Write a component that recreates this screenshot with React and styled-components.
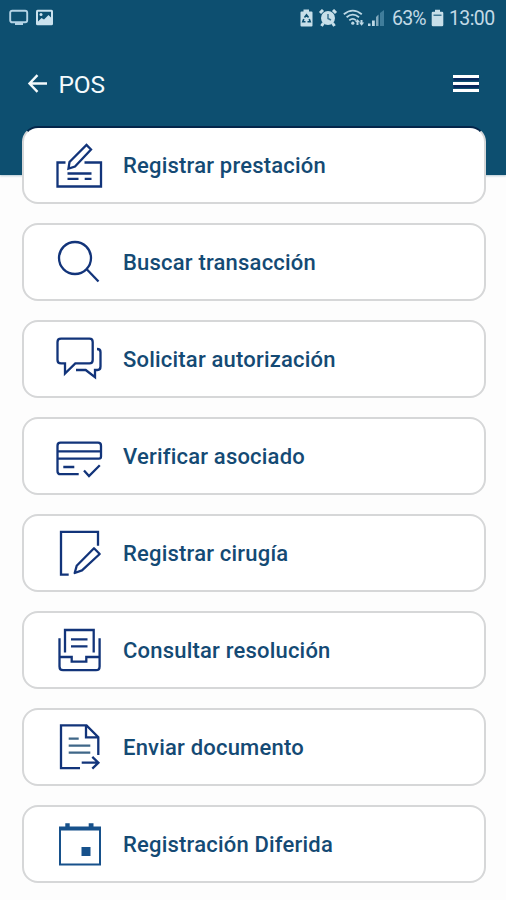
import React from "react";
import styled, { createGlobalStyle } from "styled-components";

const GlobalStyle = createGlobalStyle`
  body { margin: 0; background: #fdfdfd; }
  * { box-sizing: border-box; }
`;

const Screen = styled.div`
  width: 506px;
  height: 900px;
  overflow: hidden;
  background: #fdfdfd;
  font-family: Roboto, "Liberation Sans", sans-serif;
`;

const Header = styled.header`
  height: 175px;
  background: #0d4f70;
  box-shadow: 0 1px 2px rgba(13, 79, 112, 0.3);
`;

const StatusBar = styled.div`
  height: 36px;
  padding: 0 11px 0 9px;
  display: flex;
  justify-content: space-between;
  align-items: center;
`;

const StatusGroup = styled.div`
  display: flex;
  align-items: center;
`;

const StatusText = styled.span`
  width: ${(p) => p.$width}px;
  padding-top: 1px;
  font-size: 19.5px;
  line-height: 36px;
  color: #c3dae6;
  white-space: nowrap;
  letter-spacing: ${(p) => p.$spacing}px;
`;

const StatusIcon = styled.svg`
  display: block;
  flex: none;
`;

const TitleBar = styled.div`
  height: 96px;
  padding: 0 26px 0 27px;
  display: flex;
  align-items: center;
`;

const Title = styled.h1`
  margin: 0 auto 0 10.5px;
  padding-top: 1px;
  font-size: 24.5px;
  font-weight: 400;
  line-height: 30px;
  letter-spacing: -0.2px;
  color: #f4fafc;
`;

const IconButton = styled.button`
  padding: 0;
  border: 0;
  background: none;
  display: block;
`;

const Menu = styled.main`
  margin-top: -49px;
  padding: 0 20.5px 0 21.5px;
  display: grid;
  grid-auto-rows: 78px;
  row-gap: 19px;
`;

const Card = styled.button`
  display: flex;
  align-items: center;
  width: 100%;
  padding: 0 0 0 30px;
  border: 2px solid #d6d7d8;
  border-top-color: ${(p) => (p.$overHeader ? "#04264a" : "#d6d7d8")};
  border-radius: 16px;
  background: #fff;
  font-family: inherit;
  text-align: left;
`;

const CardIcon = styled.svg`
  display: block;
  flex: none;
  width: 50px;
  height: 50px;
  fill: none;
  stroke: #12347a;
  stroke-width: 2.3;
`;

const Label = styled.span`
  margin-left: 19.5px;
  padding-top: 2px;
  font-size: 22px;
  font-weight: 500;
  line-height: 28px;
  letter-spacing: 0.2px;
  color: #144a74;
  white-space: nowrap;
`;

const items = [
  {
    label: "Registrar prestación",
    icon: (
      <>
        <path d="M11.5 22.5H3.5V46.5H47V22.5H30.5" />
        <path d="M14.5 28.5L15.5 22L32.5 5L37 9.5L21 26.5Z" />
        <path d="M13.5 33.5H37.5M13.5 38.8H24.5M30.7 38.8H37.5" />
      </>
    ),
  },
  {
    label: "Buscar transacción",
    icon: (
      <>
        <circle cx="21" cy="21" r="16" />
        <path d="M32.5 32L44.5 44.5" />
      </>
    ),
  },
  {
    label: "Solicitar autorización",
    icon: (
      <>
        <path d="M7 4.7H35.5Q38.7 4.7 38.7 8V26Q38.7 29.4 35.5 29.4H21.3L11 39.5V29.4H7Q3.5 29.4 3.5 26V8Q3.5 4.7 7 4.7Z" />
        <path d="M43 15Q46.5 15 46.5 18V32.5Q46.5 36 43.5 36H41V43.2L31.7 36H22" />
      </>
    ),
  },
  {
    label: "Verificar asociado",
    icon: (
      <>
        <path d="M24.7 43.2H6.5Q3.5 43.2 3.5 40.2V14.7Q3.5 11.7 6.5 11.7H44Q47 11.7 47 14.7V25.5Q47 27.6 45 27.6H3.5M3.5 20.4H47" />
        <path d="M9.3 36H20.3M30 39.5L35 45L45.8 34.2" />
      </>
    ),
  },
  {
    label: "Registrar cirugía",
    icon: (
      <>
        <path d="M44 17.7V3.8H7V46.7H14.7" />
        <path d="M20.7 45L22.7 37.7L40 20.3L45.7 26L28 42.3Z" strokeLinejoin="round" />
      </>
    ),
  },
  {
    label: "Consultar resolución",
    icon: (
      <>
        <path d="M11 27.5V5H39.7V27.5M17 14.4H33.5M17 21.3H33.5" />
        <path d="M5.5 13.3V41.5Q5.5 45.2 9 45.2H42Q45.6 45.2 45.6 41.5V13.3M5.5 32H17.7V36.7H32.3V32H45.6" />
      </>
    ),
  },
  {
    label: "Enviar documento",
    icon: (
      <>
        <path d="M26 46.2H7V3.4H32.5L44.3 15.2V33M32 3.4V15.3H44.3" />
        <path stroke="#3f6788" d="M14.7 16.7H24.7M14.7 23.7H36.3M14.7 30.7H36.3" />
        <path d="M27.7 40.7H44.3M38.3 34.8L44.4 40.7L38.3 46.6" />
      </>
    ),
  },
  {
    label: "Registración Diferida",
    icon: (
      <>
        <path stroke="#17518b" d="M6 9V45.6H46V9" strokeWidth="2" />
        <path fill="#17518b" stroke="none" d="M5 7.6H11.3V4.2H15.7V7.6H34.7V4.2H39.5V7.6H47V11.4H5ZM27.5 28H36.5V37H27.5Z" />
      </>
    ),
  },
];

function TvIcon() {
  return (
    <StatusIcon width="20" height="18" viewBox="0 0 20 18" fill="none">
      <rect x="1.2" y="1.7" width="17" height="11.6" rx="2" stroke="#b4d3e5" strokeWidth="1.9" />
      <path d="M6 15H14" stroke="#b4d3e5" strokeWidth="2" />
    </StatusIcon>
  );
}

function PhotoIcon() {
  return (
    <StatusIcon width="24" height="18" viewBox="0 0 24 18">
      <rect x="7" y=".8" width="17" height="15.5" rx="1.5" fill="#cbe2ee" />
      <path d="M9 2.8H22V8.5L19.5 6L15 10.5L12.5 9L9 12.5Z" fill="#0d4f70" />
      <circle cx="12" cy="5.5" r="1.5" fill="#cbe2ee" />
    </StatusIcon>
  );
}

function RecycleBatteryIcon() {
  return (
    <StatusIcon width="13" height="18" viewBox="0 0 13 18">
      <path d="M3.5 0.5H9V2.5H11.5Q12.5 2.5 12.5 3.5V16.5Q12.5 17.5 11.5 17.5H1.5Q.5 17.5.5 16.5V3.5Q.5 2.5 1.5 2.5H3.5Z" fill="#c8dfe9" />
      <path d="M4.5 8.5L6.5 5.8L8.5 8.5M3.8 10L2.8 12.8H5.5M9.2 10L10.2 12.8H7.5" fill="none" stroke="#0d4f70" strokeWidth="1.6" />
    </StatusIcon>
  );
}

function AlarmIcon() {
  return (
    <StatusIcon width="30" height="18" viewBox="0 0 30 18">
      <path d="M10 1L7 4M20 1L23 4M10.5 14L8.5 17M19.5 14L21.5 17" stroke="#c8dfe9" strokeWidth="3" />
      <circle cx="15" cy="9" r="7" fill="#c8dfe9" />
      <path d="M15 5V9.5L18 11" fill="none" stroke="#3b7390" strokeWidth="1.5" />
    </StatusIcon>
  );
}

function WifiIcon() {
  return (
    <StatusIcon width="22" height="18" viewBox="0 0 22 18" fill="none" stroke="#bdd8e5" strokeWidth="1.8">
      <path d="M.8 5.2Q9.8-2 18.8 5.2M3.6 8.3Q9.8 3 16 8.3M6.3 11.4Q9.8 8.3 13 11.4" />
      <circle cx="9.8" cy="14.2" r="1.6" fill="#bdd8e5" stroke="none" />
      <path fill="#bdd8e5" stroke="none" d="M12 13L14.5 10.2L17 13H15.5V16H13.5V13ZM16 13.5H17.5V11H19.5V13.5H21.2L18.6 16.7Z" />
    </StatusIcon>
  );
}

function SignalIcon() {
  return (
    <StatusIcon width="27" height="18" viewBox="0 0 27 18">
      <path d="M3 14.5H5.5V17H3ZM7 11.5H9.8V17H7Z" fill="#bdd8e5" />
      <path d="M11 8L13.5 5.5V17H11Z" fill="#83aabd" />
      <path d="M15 4L19 1V17H15Z" fill="#407d9b" />
    </StatusIcon>
  );
}

function BatteryIcon() {
  return (
    <StatusIcon width="18" height="18" viewBox="0 0 18 18">
      <path d="M4 .8H9V2.8H11Q12.3 2.8 12.3 4V16Q12.3 17.2 11 17.2H2Q.7 17.2.7 16V4Q.7 2.8 2 2.8H4Z" fill="#c8dfe9" />
      <path d="M2.5 5.5H10.5V7H2.5Z" fill="#3f7894" />
    </StatusIcon>
  );
}

export default function App() {
  return (
    <>
      <GlobalStyle />
      <Screen>
        <Header>
          <StatusBar>
            <StatusGroup>
              <TvIcon />
              <PhotoIcon />
            </StatusGroup>
            <StatusGroup>
              <RecycleBatteryIcon />
              <AlarmIcon />
              <WifiIcon />
              <SignalIcon />
              <StatusText $width={39} $spacing={-0.8}>63%</StatusText>
              <BatteryIcon />
              <StatusText $width={46} $spacing={-0.6}>13:00</StatusText>
            </StatusGroup>
          </StatusBar>
          <TitleBar>
            <IconButton aria-label="Volver">
              <StatusIcon width="21" height="20" viewBox="0 0 21 20" fill="none" stroke="#f4fafc" strokeWidth="2.4">
                <path d="M20 9.5H2.5M10.5 1.2L2.5 9.5L10.5 17.8" />
              </StatusIcon>
            </IconButton>
            <Title>POS</Title>
            <IconButton aria-label="Menú">
              <StatusIcon width="28" height="20" viewBox="0 0 28 20">
                <path d="M1.5 5H27M1.5 12.2H27" stroke="#08275c" strokeWidth="3" />
                <path d="M1 2.5H27M1 9.5H27M1 16.5H27" stroke="#fff" strokeWidth="3" />
              </StatusIcon>
            </IconButton>
          </TitleBar>
        </Header>
        <Menu>
          {items.map((item, index) => (
            <Card key={item.label} $overHeader={index === 0}>
              <CardIcon viewBox="0 0 50 50">{item.icon}</CardIcon>
              <Label>{item.label}</Label>
            </Card>
          ))}
        </Menu>
      </Screen>
    </>
  );
}
